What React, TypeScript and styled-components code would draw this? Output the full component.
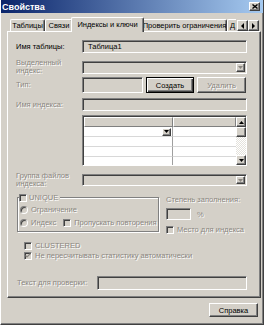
import React from 'react';
import styled, { createGlobalStyle, css } from 'styled-components';

const FACE = '#d4d0c8';

const GlobalStyle = createGlobalStyle`
  html, body { margin: 0; padding: 0; background: ${FACE}; }
  body {
    font-family: "Liberation Sans", Arial, sans-serif;
    font-size: 7.5px;
    color: #000;
    overflow: hidden;
  }
  * { box-sizing: border-box; }
`;

const raised = css`
  border: 1px solid;
  border-color: #fff #404040 #404040 #fff;
  box-shadow: inset -1px -1px 0 #808080;
`;

const sunken = css`
  border: 1px solid;
  border-color: #808080 #fff #fff #808080;
  box-shadow: inset 1px 1px 0 #404040;
`;

const disabledText = css`
  color: #8a8680;
  text-shadow: 1px 1px 0 #fff;
`;

const Window = styled.div`
  width: 264px;
  height: 325px;
  background: ${FACE};
  border-left: 1px solid #fff;
  border-right: 1px solid #404040;
  border-bottom: 1px solid #404040;
  box-shadow: inset -1px -1px 0 #808080;
  display: flex;
  flex-direction: column;
`;

const TitleBar = styled.div`
  height: 13px;
  background: linear-gradient(to right, #0a246a, #a6caf0);
  display: flex;
  align-items: center;
  justify-content: space-between;
  padding: 0 3px 0 1px;
`;

const Title = styled.span`
  color: #fff;
  font-weight: bold;
  font-size: 9px;
`;

const CloseButton = styled.div`
  width: 11px;
  height: 9px;
  background: ${FACE};
  ${raised};
  display: flex;
  align-items: center;
  justify-content: center;
`;

const TabArea = styled.div`
  margin: 4px 2px 0 6px;
  display: flex;
  flex-direction: column;
`;

const TabStrip = styled.div`
  height: 15px;
  margin-bottom: -1px;
  padding-left: 3px;
  display: flex;
  align-items: flex-end;
  position: relative;
  z-index: 1;
`;

const TabViewport = styled.div`
  width: 226px;
  height: 15px;
  overflow: hidden;
  display: flex;
  align-items: flex-end;
`;

const Tab = styled.div<{ $w: number; $active?: boolean; $cut?: boolean }>`
  flex: none;
  width: ${p => (p.$active ? p.$w + 4 : p.$w)}px;
  height: ${p => (p.$active ? 15 : 12)}px;
  margin: ${p => (p.$active ? '0 -2px 0 -2px' : '0 0 1px 0')};
  padding: 0 0 ${p => (p.$active ? 2 : 0)}px ${p => (p.$cut ? 2 : 0)}px;
  border-top: 1px solid #fff;
  border-left: 1px solid #fff;
  border-right: 1px solid #404040;
  box-shadow: inset -1px 0 0 #808080;
  border-radius: 2px 2px 0 0;
  background: ${FACE};
  position: relative;
  z-index: ${p => (p.$active ? 2 : 1)};
  display: flex;
  align-items: center;
  justify-content: ${p => (p.$cut ? 'flex-start' : 'center')};
  white-space: nowrap;
  overflow: hidden;
`;

const TabScroll = styled.div`
  display: flex;
  margin: 0 0 1px auto;
  padding-right: 2px;
`;

const ScrollArrow = styled.div`
  width: 11px;
  height: 11px;
  background: ${FACE};
  ${raised};
  display: flex;
  align-items: center;
  justify-content: center;
`;

const Panel = styled.div`
  height: 267px;
  border: 1px solid;
  border-color: #fff #404040 #404040 #fff;
  box-shadow: inset -1px -1px 0 #808080;
  padding: 8px 13px 0 8px;
  display: flex;
  flex-direction: column;
`;

const FieldRow = styled.div<{ $h: number; $mt?: number; $labelW?: number }>`
  display: grid;
  grid-template-columns: ${p => p.$labelW ?? 66}px 1fr;
  align-items: center;
  height: ${p => p.$h}px;
  margin-top: ${p => p.$mt ?? 0}px;
`;

const Label = styled.div<{ $disabled?: boolean; $ml?: number }>`
  line-height: 8px;
  white-space: nowrap;
  margin-left: ${p => p.$ml ?? 0}px;
  ${p => p.$disabled && disabledText};
`;

const Field = styled.div<{ $w?: number; $h?: number }>`
  ${sunken};
  background: ${FACE};
  height: ${p => p.$h ?? 13}px;
  width: ${p => (p.$w ? `${p.$w}px` : 'auto')};
  flex: none;
  display: flex;
  align-items: center;
  padding: 0 1px 0 5px;
  white-space: nowrap;
`;

const ComboButton = styled.div<{ $h: number }>`
  margin-left: auto;
  width: 9px;
  height: ${p => p.$h}px;
  background: ${FACE};
  ${raised};
  display: flex;
  align-items: center;
  justify-content: center;
`;

const Inline = styled.div<{ $gap: number; $mt?: number }>`
  display: flex;
  align-items: center;
  gap: ${p => p.$gap}px;
  margin-top: ${p => p.$mt ?? 0}px;
`;

const Button = styled.div<{ $w: number; $h: number; $default?: boolean; $disabled?: boolean }>`
  width: ${p => p.$w}px;
  height: ${p => p.$h}px;
  background: ${FACE};
  display: flex;
  align-items: center;
  justify-content: center;
  white-space: nowrap;
  ${p =>
    p.$default
      ? css`
          border: 1px solid #000;
          box-shadow: inset 1px 1px 0 #fff, inset -1px -1px 0 #404040, inset -2px -2px 0 #808080;
        `
      : raised};
  ${p => p.$disabled && disabledText};
`;

const GridBox = styled.div`
  height: 51px;
  ${sunken};
  display: flex;
  overflow: hidden;
  padding: 1px 0 0 1px;
`;

const Table = styled.div`
  flex: 1;
  display: grid;
  grid-template-columns: 89px 1fr;
  grid-auto-rows: 10px;
  background: #fff;
  overflow: hidden;
`;

const HeadCell = styled.div`
  background: ${FACE};
  border-top: 1px solid #fff;
  border-left: 1px solid #fff;
  border-right: 1px solid #808080;
  border-bottom: 1px solid #808080;
`;

const Cell = styled.div<{ $last?: boolean }>`
  border-bottom: 1px solid #d8d8d8;
  border-right: ${p => (p.$last ? 'none' : '1px solid #a0a0a0')};
  display: flex;
  align-items: center;
  justify-content: flex-end;
  padding-right: 1px;
`;

const CellButton = styled.div`
  width: 9px;
  height: 8px;
  background: ${FACE};
  ${raised};
  display: flex;
  align-items: center;
  justify-content: center;
`;

const ScrollBar = styled.div`
  width: 10px;
  display: flex;
  flex-direction: column;
  background-color: #eeede9;
  background-image: repeating-conic-gradient(#fff 0 25%, #e4e2dc 0 50%);
  background-size: 2px 2px;
`;

const ScrollButton = styled.div`
  width: 10px;
  height: 10px;
  flex: none;
  background: ${FACE};
  ${raised};
  display: flex;
  align-items: center;
  justify-content: center;
`;

const ScrollTrack = styled.div`
  flex: 1;
`;

const OptionsRow = styled.div`
  display: flex;
  margin-top: 9px;
  gap: 7px;
`;

const GroupBox = styled.fieldset`
  margin: 0 0 0 1px;
  width: 142px;
  height: 39px;
  padding: 3px 0 0 2px;
  border: 1px solid #808080;
  box-shadow: inset 1px 1px 0 #fff, 1px 1px 0 #fff;
  display: flex;
  flex-direction: column;
  gap: 4px;
`;

const Legend = styled.legend`
  padding: 0 2px 0 0;
  margin-left: -1px;
  background: ${FACE};
  display: flex;
  align-items: center;
  gap: 2px;
  line-height: 9px;
`;

const OptionLine = styled.div<{ $indent?: number; $mt?: number }>`
  display: flex;
  align-items: center;
  height: 9px;
  gap: 3px;
  margin-left: ${p => p.$indent ?? 0}px;
  margin-top: ${p => p.$mt ?? 0}px;
  white-space: nowrap;
`;

const Text = styled.span<{ $disabled?: boolean }>`
  line-height: 9px;
  ${p => p.$disabled && disabledText};
`;

const Check = styled.span<{ $ml?: number }>`
  flex: none;
  width: 8px;
  height: 8px;
  margin-left: ${p => p.$ml ?? 0}px;
  ${sunken};
  background: ${FACE};
  display: inline-flex;
  align-items: center;
  justify-content: center;
`;

const Radio = styled.span`
  flex: none;
  width: 8px;
  height: 8px;
  border-radius: 50%;
  border: 1px solid;
  border-color: #808080 #fff #fff #808080;
  box-shadow: inset 1px 1px 0 #404040;
  background: ${FACE};
`;

const FillColumn = styled.div`
  display: flex;
  flex-direction: column;
  padding-top: 2px;
`;

const Footer = styled.div`
  display: flex;
  justify-content: flex-end;
  padding: 5px 5px 0 0;
`;

const Arrow = ({ dir, color = '#000' }: { dir: 'up' | 'down' | 'left' | 'right'; color?: string }) => {
  const pts: Record<string, string> = {
    up: '0,3 2.5,0 5,3',
    down: '0,0 5,0 2.5,3',
    left: '3,0 3,6 0,3',
    right: '0,0 0,6 3,3',
  };
  const vertical = dir === 'up' || dir === 'down';
  return (
    <svg width={vertical ? 5 : 3} height={vertical ? 3 : 6} viewBox={vertical ? '0 0 5 3' : '0 0 3 6'}>
      <polygon points={pts[dir]} fill={color} />
    </svg>
  );
};

const CheckMark = () => (
  <svg width="6" height="5" viewBox="0 0 6 5">
    <polyline points="0.5,2.5 2,4 5.5,0.5" fill="none" stroke="#8a8680" strokeWidth="1.2" />
  </svg>
);

export default function App() {
  return (
    <>
      <GlobalStyle />
      <Window>
        <TitleBar>
          <Title>Свойства</Title>
          <CloseButton>
            <svg width="6" height="5" viewBox="0 0 6 5">
              <path d="M0.5 0.5 L5.5 4.5 M5.5 0.5 L0.5 4.5" stroke="#000" strokeWidth="1.4" />
            </svg>
          </CloseButton>
        </TitleBar>

        <TabArea>
          <TabStrip>
            <TabViewport>
              <Tab $w={35}>Таблицы</Tab>
              <Tab $w={28}>Связи</Tab>
              <Tab $w={69} $active>Индексы и ключи</Tab>
              <Tab $w={85}>Проверить ограничения</Tab>
              <Tab $w={40} $cut>Д</Tab>
            </TabViewport>
            <TabScroll>
              <ScrollArrow><Arrow dir="left" /></ScrollArrow>
              <ScrollArrow><Arrow dir="right" /></ScrollArrow>
            </TabScroll>
          </TabStrip>

          <Panel>
            <FieldRow $h={13}>
              <Label>Имя таблицы:</Label>
              <Field>Таблица1</Field>
            </FieldRow>

            <FieldRow $h={13} $mt={6}>
              <Label $disabled>Выделенный<br />индекс:</Label>
              <Field>
                <ComboButton $h={9}><Arrow dir="down" color="#8a8680" /></ComboButton>
              </Field>
            </FieldRow>

            <FieldRow $h={16} $mt={5}>
              <Label $disabled>Тип:</Label>
              <Inline $gap={3}>
                <Field $w={61} $h={16} />
                <Button $w={48} $h={16} $default>Создать</Button>
                <Button $w={49} $h={16} $disabled>Удалить</Button>
              </Inline>
            </FieldRow>

            <FieldRow $h={13} $mt={5}>
              <Label $disabled>Имя индекса:</Label>
              <Field />
            </FieldRow>

            <FieldRow $h={51} $mt={4}>
              <span />
              <GridBox>
                <Table>
                  <HeadCell />
                  <HeadCell />
                  <Cell><CellButton><Arrow dir="down" /></CellButton></Cell>
                  <Cell $last />
                  <Cell />
                  <Cell $last />
                  <Cell />
                  <Cell $last />
                  <Cell />
                  <Cell $last />
                </Table>
                <ScrollBar>
                  <ScrollButton><Arrow dir="up" /></ScrollButton>
                  <ScrollButton />
                  <ScrollTrack />
                  <ScrollButton><Arrow dir="down" /></ScrollButton>
                </ScrollBar>
              </GridBox>
            </FieldRow>

            <FieldRow $h={12} $mt={6}>
              <Label $disabled>Группа файлов<br />индекса:</Label>
              <Field $h={12}>
                <ComboButton $h={8}><Arrow dir="down" color="#8a8680" /></ComboButton>
              </Field>
            </FieldRow>

            <OptionsRow>
              <GroupBox>
                <Legend>
                  <Check />
                  <Text $disabled>UNIQUE</Text>
                </Legend>
                <OptionLine>
                  <Radio />
                  <Text $disabled>Ограничение</Text>
                </OptionLine>
                <OptionLine>
                  <Radio />
                  <Text $disabled>Индекс</Text>
                  <Check $ml={4} />
                  <Text $disabled>Пропускать повторения</Text>
                </OptionLine>
              </GroupBox>
              <FillColumn>
                <Text $disabled>Степень заполнения:</Text>
                <Inline $gap={6} $mt={4}>
                  <Field $w={25} $h={12} />
                  <Text $disabled>%</Text>
                </Inline>
                <OptionLine $mt={5}>
                  <Check />
                  <Text $disabled>Место для индекса</Text>
                </OptionLine>
              </FillColumn>
            </OptionsRow>

            <OptionLine $indent={8} $mt={7}>
              <Check />
              <Text $disabled>CLUSTERED</Text>
            </OptionLine>
            <OptionLine $indent={8} $mt={1}>
              <Check><CheckMark /></Check>
              <Text $disabled>Не пересчитывать статистику автоматически</Text>
            </OptionLine>

            <FieldRow $h={14} $mt={16} $labelW={81}>
              <Label $disabled $ml={1}>Текст для проверки:</Label>
              <Field $w={150} $h={14} />
            </FieldRow>
          </Panel>
        </TabArea>

        <Footer>
          <Button $w={49} $h={14}>Справка</Button>
        </Footer>
      </Window>
    </>
  );
}
